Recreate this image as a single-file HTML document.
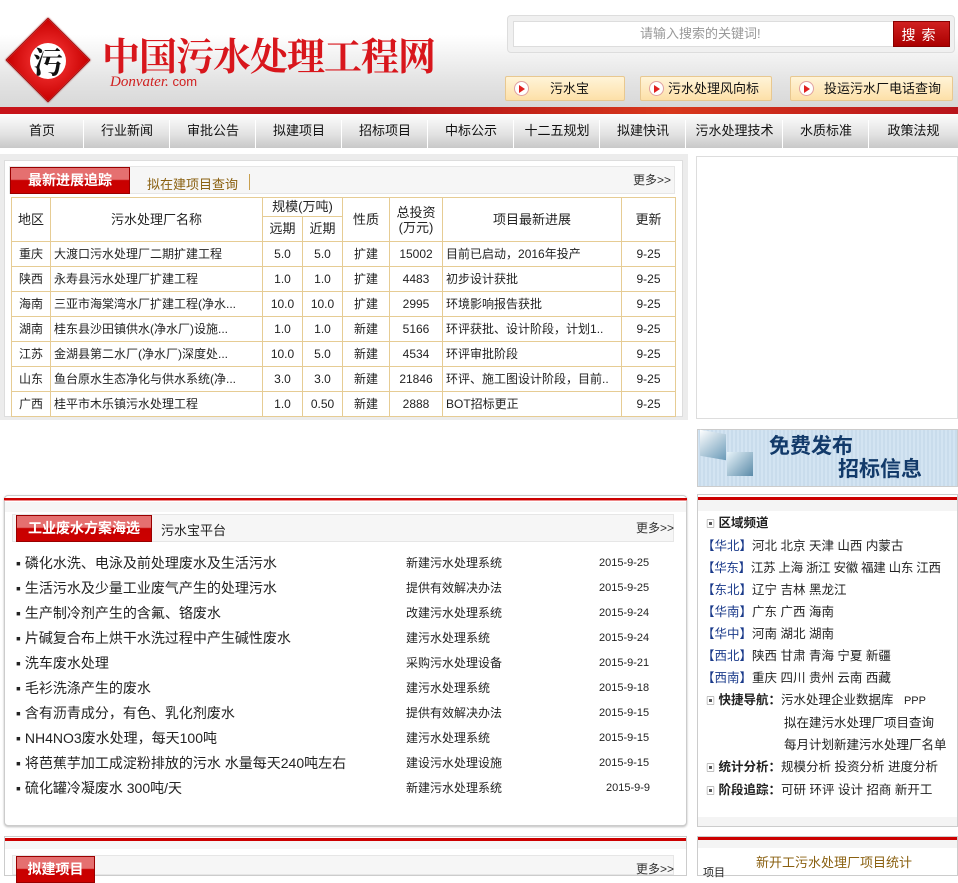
<!DOCTYPE html>
<html><head><meta charset="utf-8"><style>
*{margin:0;padding:0;box-sizing:border-box}
body{width:958px;height:871px;overflow:hidden;background:#fff;position:relative;font-family:"Liberation Sans","Noto Sans CJK SC",sans-serif;font-size:13px;color:#222}
.a{position:absolute}
.hdr{left:0;top:0;width:958px;height:108px;background:linear-gradient(#fff 0,#fff 35px,#e4e4e4 80px,#d8d8d8 106px)}
.redbar{left:0;top:107px;width:958px;height:7px;background:linear-gradient(90deg,#c8141a,#b01016 40%,#d8381c 70%,#b8141c)}
.nav{left:0;top:114px;width:958px;height:34px;background:linear-gradient(#fdfdfd,#e2e2e2 60%,#c8c8c8)}
.nav span{position:absolute;top:0;height:34px;line-height:34px;text-align:center;font-size:13px;color:#111}
.nav i{position:absolute;top:6px;width:1px;height:28px;background:#555;border-right:1px solid #fff}
.btn{height:25px;border:1px solid #e8c890;border-radius:2px;background:linear-gradient(#fff4d8,#fde0a8);font-size:13px;line-height:23px;color:#111}
.btn b{position:absolute;left:8px;top:4px;width:15px;height:15px;border-radius:50%;background:#fff;border:1px solid #e0a0a0}
.btn b:after{content:"";position:absolute;left:4px;top:3px;border-left:6px solid #e02020;border-top:4px solid transparent;border-bottom:4px solid transparent}
.tab{height:27px;background:linear-gradient(#e57070 0,#e57070 45%,#c80000 50%,#c00);border:1px solid #900;color:#fff;font-weight:bold;font-size:14px;line-height:25px;text-align:center;white-space:nowrap;overflow:hidden}
table{border-collapse:collapse;table-layout:fixed}
td{border:1px solid #e6cc94;text-align:center;font-size:12px;height:25px;padding:0;white-space:nowrap;overflow:hidden;line-height:14px}
td.l{text-align:left;padding-left:3px}
.li{font-size:14px;height:25px;line-height:25px;white-space:nowrap}
.rg{font-size:12.5px;line-height:22px;color:#222;white-space:nowrap}
.rg b{color:#1a3a8a;font-weight:normal}
</style></head><body>
<div class="a hdr"></div>
<div class="a" style="left:18px;top:30px;width:60px;height:60px;transform:rotate(45deg);background:radial-gradient(#ff4040,#c80000);border:1px solid #a00;box-shadow:0 0 2px #800"></div>
<div class="a" style="left:30px;top:43px;width:36px;height:36px;border-radius:50%;background:#fff"></div>
<div class="a" style="left:30px;top:40px;width:36px;font-size:30px;line-height:40px;text-align:center;font-family:'Noto Serif CJK SC',serif;font-weight:bold;color:#111">污</div>
<div class="a" style="left:102px;top:30px;font-size:38px;line-height:48px;font-family:'Noto Serif CJK SC',serif;font-weight:bold;color:#d8161c;letter-spacing:-1px">中国污水处理工程网</div>
<div class="a" style="left:110px;top:74px;font-size:15px;color:#d02020;font-family:'Liberation Serif',serif;font-style:italic">Donvater. <span style="font-family:'Liberation Sans';font-style:normal;font-size:13px">com</span></div>
<div class="a" style="left:507px;top:15px;width:448px;height:38px;border:1px solid #ddd;border-radius:4px;background:#f0f0f0"></div>
<div class="a" style="left:513px;top:21px;width:381px;height:26px;background:#fff;border:1px solid #ddd;color:#999;font-size:13px;line-height:24px;padding-left:126px">请输入搜索的关键词!</div>
<div class="a" style="left:893px;top:21px;width:57px;height:26px;background:linear-gradient(#d02020,#a00);color:#fff;font-size:14px;line-height:26px;text-align:center;letter-spacing:6px;border:1px solid #800">搜索</div>
<div class="a btn" style="left:505px;top:76px;width:120px"><b></b><span class="a" style="left:44px">污水宝</span></div>
<div class="a btn" style="left:640px;top:76px;width:132px"><b></b><span class="a" style="left:27px">污水处理风向标</span></div>
<div class="a btn" style="left:790px;top:76px;width:163px"><b></b><span class="a" style="left:33px">投运污水厂电话查询</span></div>
<div class="a redbar"></div>
<div class="a nav">
<span style="left:0;width:84px">首页</span><i style="left:83px"></i>
<span style="left:84px;width:86px">行业新闻</span><i style="left:169px"></i>
<span style="left:170px;width:86px">审批公告</span><i style="left:255px"></i>
<span style="left:256px;width:86px">拟建项目</span><i style="left:341px"></i>
<span style="left:342px;width:86px">招标项目</span><i style="left:427px"></i>
<span style="left:428px;width:86px">中标公示</span><i style="left:513px"></i>
<span style="left:514px;width:86px">十二五规划</span><i style="left:599px"></i>
<span style="left:600px;width:86px">拟建快讯</span><i style="left:685px"></i>
<span style="left:686px;width:97px">污水处理技术</span><i style="left:782px"></i>
<span style="left:783px;width:86px">水质标准</span><i style="left:868px"></i>
<span style="left:869px;width:89px">政策法规</span>
</div>
<div class="a" style="left:0;top:154px;width:688px;height:266px;background:#ececec"></div>
<div class="a" style="left:4px;top:160px;width:679px;height:257px;background:#fff;border:1px solid #ddd"></div>
<div class="a" style="left:9px;top:166px;width:666px;height:28px;background:#f6f6f6;border:1px solid #e6e6e6"></div>
<div class="a tab" style="left:10px;top:167px;width:120px">最新进展追踪</div>
<div class="a" style="left:147px;top:174px;color:#8a6010;font-size:13px">拟在建项目查询</div>
<div class="a" style="left:249px;top:174px;width:1px;height:16px;background:#c8a050"></div>
<div class="a" style="left:633px;top:171px;font-size:12px;color:#333">更多&gt;&gt;</div>
<table class="a" style="left:11px;top:197px;width:664px">
<colgroup><col style="width:39px"><col style="width:212px"><col style="width:40px"><col style="width:40px"><col style="width:47px"><col style="width:53px"><col style="width:179px"><col style="width:54px"></colgroup>
<tr><td rowspan="2" style="font-size:13px">地区</td><td rowspan="2" style="font-size:13px">污水处理厂名称</td><td colspan="2" style="height:19px;font-size:13px">规模(万吨)</td><td rowspan="2" style="font-size:13px">性质</td><td rowspan="2" style="font-size:13px;line-height:15px">总投资<br>(万元)</td><td rowspan="2" style="font-size:13px">项目最新进展</td><td rowspan="2" style="font-size:13px">更新</td></tr>
<tr><td style="height:25px;font-size:13px">远期</td><td style="font-size:13px">近期</td></tr>
<tr><td>重庆</td><td class="l">大渡口污水处理厂二期扩建工程</td><td>5.0</td><td>5.0</td><td>扩建</td><td>15002</td><td class="l">目前已启动，2016年投产</td><td>9-25</td></tr>
<tr><td>陕西</td><td class="l">永寿县污水处理厂扩建工程</td><td>1.0</td><td>1.0</td><td>扩建</td><td>4483</td><td class="l">初步设计获批</td><td>9-25</td></tr>
<tr><td>海南</td><td class="l">三亚市海棠湾水厂扩建工程(净水...</td><td>10.0</td><td>10.0</td><td>扩建</td><td>2995</td><td class="l">环境影响报告获批</td><td>9-25</td></tr>
<tr><td>湖南</td><td class="l">桂东县沙田镇供水(净水厂)设施...</td><td>1.0</td><td>1.0</td><td>新建</td><td>5166</td><td class="l">环评获批、设计阶段，计划1..</td><td>9-25</td></tr>
<tr><td>江苏</td><td class="l">金湖县第二水厂(净水厂)深度处...</td><td>10.0</td><td>5.0</td><td>新建</td><td>4534</td><td class="l">环评审批阶段</td><td>9-25</td></tr>
<tr><td>山东</td><td class="l">鱼台原水生态净化与供水系统(净...</td><td>3.0</td><td>3.0</td><td>新建</td><td>21846</td><td class="l">环评、施工图设计阶段，目前..</td><td>9-25</td></tr>
<tr><td>广西</td><td class="l">桂平市木乐镇污水处理工程</td><td>1.0</td><td>0.50</td><td>新建</td><td>2888</td><td class="l">BOT招标更正</td><td>9-25</td></tr>
</table>
<div class="a" style="left:696px;top:156px;width:262px;height:263px;border:1px solid #ddd;background:#fff"></div>
<div class="a" style="left:697px;top:429px;width:261px;height:58px;border:1px solid #ccc;background:repeating-linear-gradient(90deg,#d8e8f4 0,#c4d8ea 2px,#d8e8f4 4px)"></div>
<div class="a" style="left:700px;top:432px;width:26px;height:26px;background:linear-gradient(135deg,#fff,#6a9ab8);transform:skewY(10deg)"></div>
<div class="a" style="left:727px;top:452px;width:26px;height:24px;background:linear-gradient(135deg,#e8f4fa,#5a8aa8)"></div>
<div class="a" style="left:769px;top:434px;font-size:21px;font-weight:bold;color:#123a6a;line-height:26px">免费发布</div>
<div class="a" style="left:838px;top:457px;font-size:21px;font-weight:bold;color:#123a6a;line-height:26px">招标信息</div>
<div class="a" style="left:4px;top:495px;width:683px;height:331px;border:1px solid #ccc;border-radius:4px;background:#fff;box-shadow:0 1px 2px #bbb"></div>
<div class="a" style="left:4px;top:498px;width:683px;height:3px;background:#c00;border-bottom:1px solid #e88"></div>
<div class="a" style="left:5px;top:502px;width:681px;height:10px;background:#f6f6f6"></div>
<div class="a" style="left:12px;top:514px;width:662px;height:28px;background:#f6f6f6;border:1px solid #e6e6e6"></div>
<div class="a tab" style="left:16px;top:515px;width:136px">工业废水方案海选</div>
<div class="a" style="left:161px;top:520px;font-size:13px">污水宝平台</div>
<div class="a" style="left:636px;top:519px;font-size:12px;color:#333">更多&gt;&gt;</div>
<div class="a" style="left:16px;top:551px;width:660px">
<div class="li" style="position:relative">▪ 磷化水洗、电泳及前处理废水及生活污水<span class="a" style="left:390px;font-size:12px">新建污水处理系统</span><span class="a" style="left:583px;font-size:11px">2015-9-25</span></div>
<div class="li" style="position:relative">▪ 生活污水及少量工业废气产生的处理污水<span class="a" style="left:390px;font-size:12px">提供有效解决办法</span><span class="a" style="left:583px;font-size:11px">2015-9-25</span></div>
<div class="li" style="position:relative">▪ 生产制冷剂产生的含氟、铬废水<span class="a" style="left:390px;font-size:12px">改建污水处理系统</span><span class="a" style="left:583px;font-size:11px">2015-9-24</span></div>
<div class="li" style="position:relative">▪ 片碱复合布上烘干水洗过程中产生碱性废水<span class="a" style="left:390px;font-size:12px">建污水处理系统</span><span class="a" style="left:583px;font-size:11px">2015-9-24</span></div>
<div class="li" style="position:relative">▪ 洗车废水处理<span class="a" style="left:390px;font-size:12px">采购污水处理设备</span><span class="a" style="left:583px;font-size:11px">2015-9-21</span></div>
<div class="li" style="position:relative">▪ 毛衫洗涤产生的废水<span class="a" style="left:390px;font-size:12px">建污水处理系统</span><span class="a" style="left:583px;font-size:11px">2015-9-18</span></div>
<div class="li" style="position:relative">▪ 含有沥青成分，有色、乳化剂废水<span class="a" style="left:390px;font-size:12px">提供有效解决办法</span><span class="a" style="left:583px;font-size:11px">2015-9-15</span></div>
<div class="li" style="position:relative">▪ NH4NO3废水处理，每天100吨<span class="a" style="left:390px;font-size:12px">建污水处理系统</span><span class="a" style="left:583px;font-size:11px">2015-9-15</span></div>
<div class="li" style="position:relative">▪ 将芭蕉芋加工成淀粉排放的污水 水量每天240吨左右<span class="a" style="left:390px;font-size:12px">建设污水处理设施</span><span class="a" style="left:583px;font-size:11px">2015-9-15</span></div>
<div class="li" style="position:relative">▪ 硫化罐冷凝废水 300吨/天<span class="a" style="left:390px;font-size:12px">新建污水处理系统</span><span class="a" style="left:590px;font-size:11px">2015-9-9</span></div>
</div>
<div class="a" style="left:697px;top:494px;width:261px;height:333px;border:1px solid #ccc;background:#fff"></div>
<div class="a" style="left:698px;top:497px;width:259px;height:3px;background:#c00"></div>
<div class="a" style="left:698px;top:500px;width:259px;height:11px;background:#f4f4f4"></div>
<div class="a" style="left:698px;top:817px;width:259px;height:9px;background:#f4f4f4"></div>
<div class="a rg" style="left:702px;top:512px;width:255px">
<div style="padding-left:4px"><span style="font-size:9px;color:#555">▣</span> <strong>区域频道</strong></div>
<div><b>【华北】</b>河北 北京 天津 山西 内蒙古</div>
<div style="letter-spacing:-0.3px"><b>【华东】</b>江苏 上海 浙江 安徽 福建 山东 江西</div>
<div><b>【东北】</b>辽宁 吉林 黑龙江</div>
<div><b>【华南】</b>广东 广西 海南</div>
<div><b>【华中】</b>河南 湖北 湖南</div>
<div><b>【西北】</b>陕西 甘肃 青海 宁夏 新疆</div>
<div><b>【西南】</b>重庆 四川 贵州 云南 西藏</div>
<div style="padding-left:4px"><span style="font-size:9px;color:#555">▣</span> <strong>快捷导航：</strong>污水处理企业数据库 &nbsp; <span style="font-size:11px">PPP</span></div>
<div style="padding-left:82px">拟在建污水处理厂项目查询</div>
<div style="padding-left:82px">每月计划新建污水处理厂名单</div>
<div style="padding-left:4px"><span style="font-size:9px;color:#555">▣</span> <strong>统计分析：</strong>规模分析 投资分析 进度分析</div>
<div style="padding-left:4px"><span style="font-size:9px;color:#555">▣</span> <strong>阶段追踪：</strong>可研 环评 设计 招商 新开工</div>
</div>
<div class="a" style="left:4px;top:836px;width:683px;height:40px;border:1px solid #ccc;background:#fff"></div>
<div class="a" style="left:5px;top:838px;width:681px;height:3px;background:#c00"></div>
<div class="a" style="left:5px;top:841px;width:681px;height:8px;background:#f6f6f6"></div>
<div class="a" style="left:12px;top:855px;width:662px;height:20px;background:#f6f6f6;border:1px solid #e6e6e6"></div>
<div class="a tab" style="left:16px;top:856px;width:79px">拟建项目</div>
<div class="a" style="left:636px;top:860px;font-size:12px;color:#333">更多&gt;&gt;</div>
<div class="a" style="left:697px;top:836px;width:261px;height:40px;border:1px solid #ccc;background:#fff"></div>
<div class="a" style="left:698px;top:837px;width:259px;height:3px;background:#c00"></div>
<div class="a" style="left:698px;top:840px;width:259px;height:8px;background:#f4f4f4"></div>
<div class="a" style="left:756px;top:852px;font-size:13px;color:#8a6010">新开工污水处理厂项目统计</div>
<div class="a" style="left:703px;top:864px;font-size:11px">项目</div>
</body></html>
